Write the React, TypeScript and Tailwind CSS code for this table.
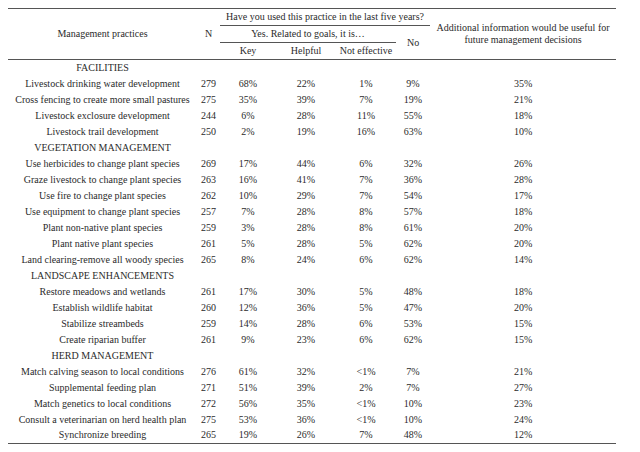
type Row = [string, string, string, string, string, string, string];

interface Section {
  title: string;
  rows: Row[];
}

const sections: Section[] = [
  {
    title: "FACILITIES",
    rows: [
      ["Livestock drinking water development", "279", "68%", "22%", "1%", "9%", "35%"],
      ["Cross fencing to create more small pastures", "275", "35%", "39%", "7%", "19%", "21%"],
      ["Livestock exclosure development", "244", "6%", "28%", "11%", "55%", "18%"],
      ["Livestock trail development", "250", "2%", "19%", "16%", "63%", "10%"],
    ],
  },
  {
    title: "VEGETATION MANAGEMENT",
    rows: [
      ["Use herbicides to change plant species", "269", "17%", "44%", "6%", "32%", "26%"],
      ["Graze livestock to change plant species", "263", "16%", "41%", "7%", "36%", "28%"],
      ["Use fire to change plant species", "262", "10%", "29%", "7%", "54%", "17%"],
      ["Use equipment to change plant species", "257", "7%", "28%", "8%", "57%", "18%"],
      ["Plant non-native plant species", "259", "3%", "28%", "8%", "61%", "20%"],
      ["Plant native plant species", "261", "5%", "28%", "5%", "62%", "20%"],
      ["Land clearing-remove all woody species", "265", "8%", "24%", "6%", "62%", "14%"],
    ],
  },
  {
    title: "LANDSCAPE ENHANCEMENTS",
    rows: [
      ["Restore meadows and wetlands", "261", "17%", "30%", "5%", "48%", "18%"],
      ["Establish wildlife habitat", "260", "12%", "36%", "5%", "47%", "20%"],
      ["Stabilize streambeds", "259", "14%", "28%", "6%", "53%", "15%"],
      ["Create riparian buffer", "261", "9%", "23%", "6%", "62%", "15%"],
    ],
  },
  {
    title: "HERD MANAGEMENT",
    rows: [
      ["Match calving season to local conditions", "276", "61%", "32%", "<1%", "7%", "21%"],
      ["Supplemental feeding plan", "271", "51%", "39%", "2%", "7%", "27%"],
      ["Match genetics to local conditions", "272", "56%", "35%", "<1%", "10%", "23%"],
      ["Consult a veterinarian on herd health plan", "275", "53%", "36%", "<1%", "10%", "24%"],
      ["Synchronize breeding", "265", "19%", "26%", "7%", "48%", "12%"],
    ],
  },
];

export default function App() {
  return (
    <div className="w-[640px] h-[452px] bg-white pt-[8px] pl-[8px] font-['Liberation_Serif',serif] text-[10px] text-[#2b2b2b]">
      <table className="w-[608px] table-fixed border-collapse text-center leading-none">
        <colgroup>
          <col className="w-[189px]" />
          <col className="w-[23px]" />
          <col className="w-[56px]" />
          <col className="w-[60px]" />
          <col className="w-[60px]" />
          <col className="w-[34px]" />
          <col className="w-[186px]" />
        </colgroup>
        <thead className="border-t border-b border-[#555]">
          <tr className="h-[17px]">
            <th rowSpan={3} className="font-normal">Management practices</th>
            <th rowSpan={3} className="font-normal">N</th>
            <th colSpan={4} className="font-normal border-b border-[#555]">
              Have you used this practice in the last five years?
            </th>
            <th rowSpan={3} className="font-normal leading-[12px]">
              Additional information would be useful for
              <br />
              future management decisions
            </th>
          </tr>
          <tr className="h-[17px]">
            <th colSpan={3} className="font-normal border-b border-[#555]">
              Yes. Related to goals, it is…
            </th>
            <th rowSpan={2} className="font-normal">No</th>
          </tr>
          <tr className="h-[17px]">
            <th className="font-normal">Key</th>
            <th className="font-normal">Helpful</th>
            <th className="font-normal">Not effective</th>
          </tr>
        </thead>
        <tbody className="border-b border-[#555]">
          {sections.map((s) => (
            <>
              <tr key={s.title} className="h-[16px]">
                <td>{s.title}</td>
                <td colSpan={6}></td>
              </tr>
              {s.rows.map((r) => (
                <tr key={r[0]} className="h-[16px]">
                  {r.map((c, i) => (
                    <td key={i} className="whitespace-nowrap">
                      {c}
                    </td>
                  ))}
                </tr>
              ))}
            </>
          ))}
        </tbody>
      </table>
    </div>
  );
}
